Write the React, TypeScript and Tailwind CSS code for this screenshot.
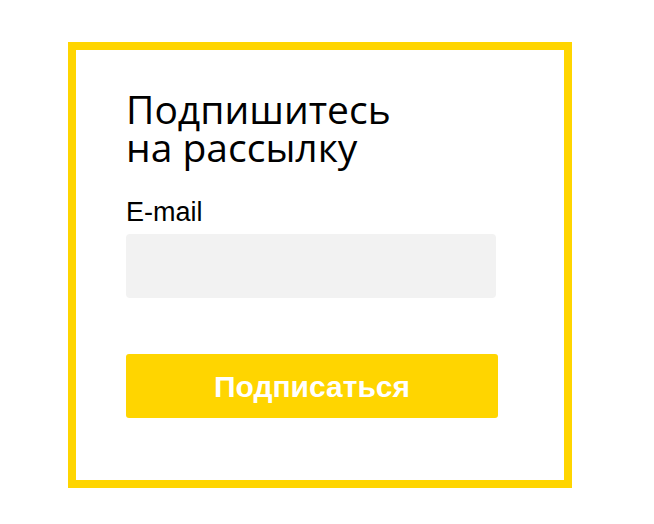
import React from 'react';

const App: React.FC = () => {
  return (
    <div className="min-h-screen w-full bg-white pt-[42px] pl-[68px]">
      <div className="w-[504px] h-[446px] border-[8px] border-[#ffd500] bg-white pl-[50px] pt-[40px]">
        <h2 className="text-[39px] leading-[38px] text-black font-normal" style={{ fontFamily: '"Open Sans", sans-serif' }}>
          Подпишитесь
          <br />
          на рассылку
        </h2>

        <form className="mt-[31px]" onSubmit={(e) => e.preventDefault()}>
          <label
            htmlFor="email"
            className="block text-[27px] leading-[30px] text-black"
            style={{ fontFamily: '"Liberation Sans", Arial, sans-serif' }}
          >
            E-mail
          </label>
          <input
            id="email"
            type="email"
            className="mt-[7px] block w-[370px] h-[64px] rounded-[4px] bg-[#f2f2f2] px-4 outline-none"
          />
          <button
            type="submit"
            className="mt-[56px] flex items-center justify-center w-[372px] h-[64px] rounded-[3px] bg-[#ffd500] text-white font-bold text-[30px]"
            style={{ fontFamily: '"Liberation Sans", Arial, sans-serif' }}
          >
            Подписаться
          </button>
        </form>
      </div>
    </div>
  );
};

export default App;
